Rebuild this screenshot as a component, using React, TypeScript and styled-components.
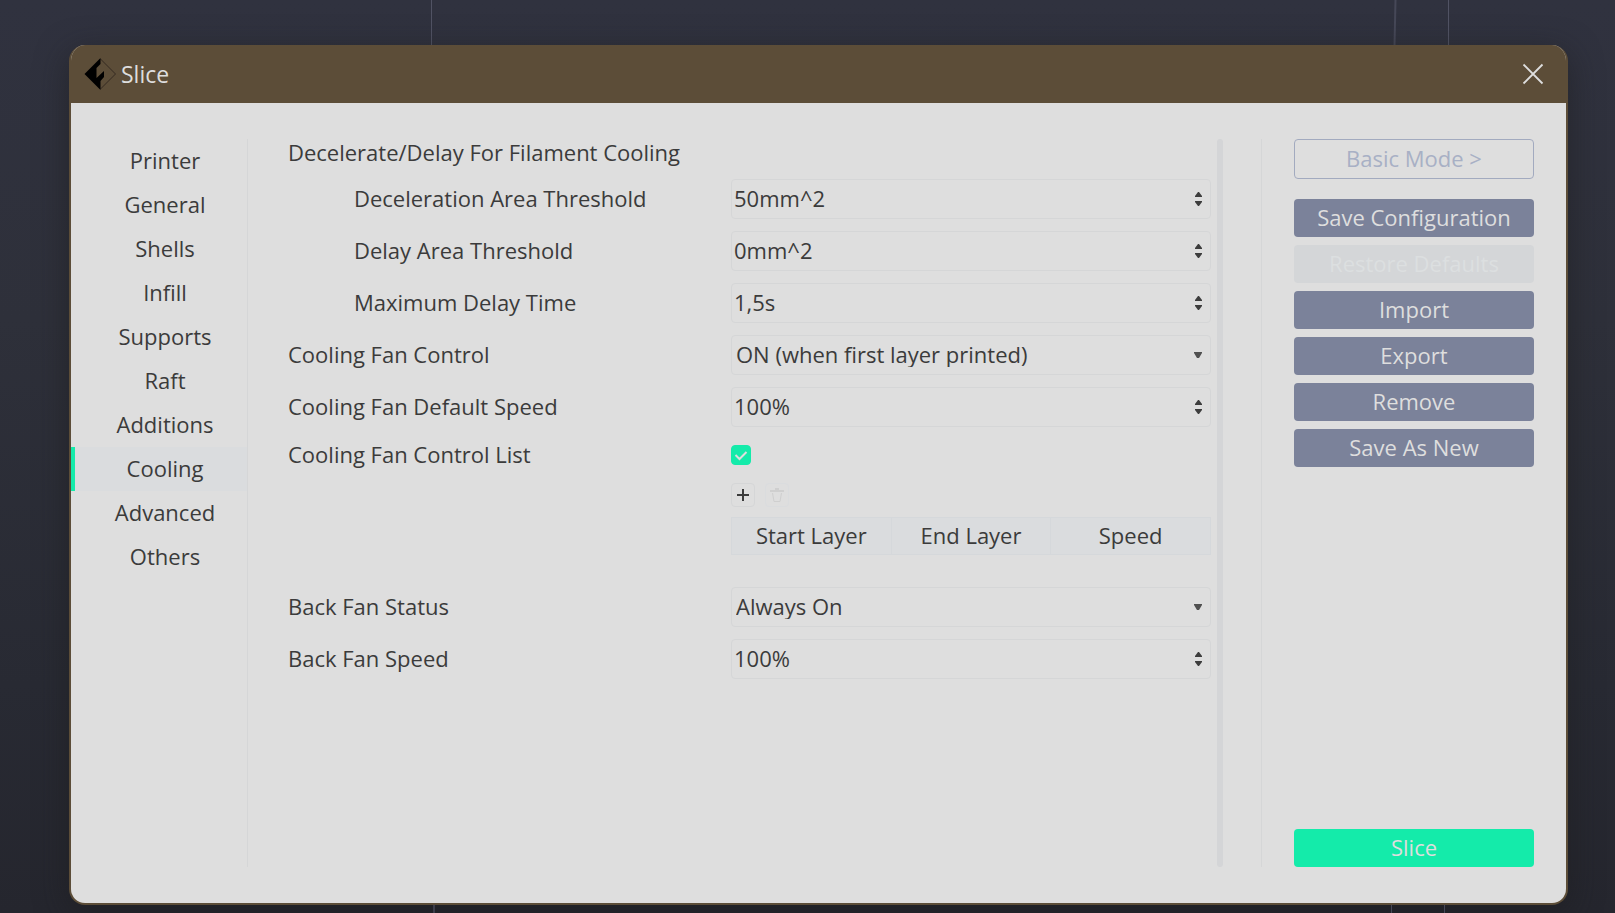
import React, { useState } from "react";
import styled, { createGlobalStyle } from "styled-components";

const color = {
  frame: "#5c4d38",
  panel: "#dedede",
  text: "#3b3b3b",
  line: "#d5d6d7",
  tint: "#dadcde",
  accent: "#14ebaa",
  slate: "#7b829a",
};

const GlobalStyle = createGlobalStyle`
  * { box-sizing: border-box; }
  body { margin: 0; background: #2b2d36; }
  body, button, input, select {
    font-family: "Open Sans", "Noto Sans", sans-serif;
    font-size: 22px;
    line-height: 26px;
    color: ${color.text};
  }
`;

const Viewport = styled.div`
  position: relative;
  display: flex;
  min-height: 100vh;
  padding: 45px 47px 8px 69px;
  background: linear-gradient(180deg, #30323f 0%, #2e303a 35%, #282a33 75%, #25262e 100%);
`;

const Guides = styled.svg`
  position: absolute;
  inset: 0;
  width: 100%;
  height: 100%;
`;

const Dialog = styled.section`
  position: relative;
  flex: 1;
  display: flex;
  flex-direction: column;
  min-width: 0;
  border: 2px solid ${color.frame};
  border-top: 0;
  border-radius: 16px;
  background: ${color.panel};
  box-shadow: 0 8px 32px rgba(28, 28, 30, 0.6);
  overflow: hidden;
`;

const TitleBar = styled.header`
  display: flex;
  align-items: center;
  gap: 5px;
  height: 58px;
  padding: 0 22px 0 13px;
  background: ${color.frame};
`;

const Title = styled.h1`
  flex: 1;
  margin: 0;
  font-size: 23px;
  font-weight: 400;
  color: ${color.panel};
`;

const CloseButton = styled.button`
  display: flex;
  padding: 0;
  border: 0;
  background: none;
`;

const Body = styled.div`
  flex: 1;
  display: flex;
  padding: 36px 32px 36px 0;
`;

const Nav = styled.nav`
  flex: 0 0 177px;
  display: flex;
  flex-direction: column;
  border-right: 1px solid ${color.line};
`;

const NavItem = styled.button<{ $active: boolean }>`
  height: 44px;
  padding: 0 0 2px 8px;
  border: 0;
  border-left: 4px solid ${(p) => (p.$active ? color.accent : "transparent")};
  background: ${(p) => (p.$active ? color.tint : "none")};
  text-align: center;
`;

const Form = styled.form`
  flex: 1;
  display: flex;
  flex-direction: column;
  gap: 12px;
  padding: 0 6px 0 40px;
`;

const Heading = styled.h2`
  margin: 0;
  padding-bottom: 2px;
  font-size: 22px;
  font-weight: 400;
`;

const Row = styled.div`
  display: flex;
  align-items: center;
  min-height: 32px;
`;

const Label = styled.label<{ $indent?: boolean }>`
  flex: 0 0 443px;
  padding-bottom: 2px;
  padding-left: ${(p) => (p.$indent ? 66 : 0)}px;
`;

const Field = styled.div`
  flex: 1;
  display: flex;
  align-items: center;
  height: 40px;
  padding-right: 8px;
  border: 1px solid ${color.line};
  border-radius: 4px;
`;

const TextInput = styled.input`
  flex: 1;
  min-width: 0;
  height: 38px;
  padding: 0 0 2px 2px;
  border: 0;
  outline: 0;
  background: none;
`;

const Steppers = styled.div`
  display: flex;
  flex-direction: column;
`;

const StepButton = styled.button`
  display: flex;
  padding: 2px 0;
  border: 0;
  background: none;
`;

const SelectBox = styled.div`
  flex: 1;
  display: grid;
  align-items: center;
  > * { grid-area: 1 / 1; }
  > svg { justify-self: end; margin-right: 9px; pointer-events: none; }
`;

const Select = styled.select`
  width: 100%;
  height: 40px;
  padding: 0 24px 2px 4px;
  border: 1px solid ${color.line};
  border-radius: 4px;
  outline: 0;
  appearance: none;
  background: none;
`;

const CheckWrap = styled.span`
  display: grid;
  > * { grid-area: 1 / 1; }
  > svg { pointer-events: none; }
`;

const Checkbox = styled.input`
  width: 20px;
  height: 20px;
  margin: 0;
  appearance: none;
  border: 1px solid ${color.accent};
  border-radius: 4px;
  &:checked { background: ${color.accent}; }
  &:not(:checked) + svg { visibility: hidden; }
`;

const LayerList = styled.div`
  display: flex;
  flex-direction: column;
  gap: 10px;
  margin-left: 443px;
  padding-bottom: 20px;
`;

const Tools = styled.div`
  display: flex;
  gap: 10px;
`;

const ToolButton = styled.button`
  display: grid;
  place-items: center;
  width: 24px;
  height: 24px;
  padding: 0;
  border: 1px solid ${color.line};
  border-radius: 4px;
  background: none;
  &:disabled { border-color: ${color.tint}; }
`;

const Table = styled.table`
  width: 100%;
  table-layout: fixed;
  border-collapse: collapse;
`;

const HeaderCell = styled.th`
  height: 37px;
  padding: 0 0 2px;
  border: 1px solid #d5d8db;
  background: ${color.tint};
  font-weight: 400;
`;

const ScrollTrack = styled.div`
  flex: 0 0 6px;
  margin-right: 38px;
  border-radius: 3px;
  background: #d4d5d7;
`;

const Actions = styled.aside`
  flex: 0 0 273px;
  display: flex;
  flex-direction: column;
  gap: 8px;
  padding-left: 32px;
  border-left: 1px solid ${color.line};
`;

const ActionButton = styled.button`
  height: 38px;
  padding: 0 0 2px;
  border: 0;
  border-radius: 4px;
  background: ${color.slate};
  color: ${color.panel};
  &:disabled { background: #d4d6d8; color: #dcdfe0; }
`;

const ModeButton = styled(ActionButton)`
  height: 40px;
  margin-bottom: 12px;
  border: 1px solid #a2aabf;
  background: none;
  color: #a8b0c5;
`;

const SliceButton = styled(ActionButton)`
  margin-top: auto;
  background: ${color.accent};
`;

const sections = ["Printer", "General", "Shells", "Infill", "Supports", "Raft", "Additions", "Cooling", "Advanced", "Others"];

function SpinRow({ id, label, value, indent }: { id: string; label: string; value: string; indent?: boolean }) {
  return (
    <Row>
      <Label htmlFor={id} $indent={indent}>{label}</Label>
      <Field>
        <TextInput id={id} defaultValue={value} />
        <Steppers>
          <StepButton type="button" aria-label={`Increase ${label}`}>
            <svg width="7" height="5"><path d="M0 5V4L3 0H4L7 4V5Z" fill="#3d3d3d" /></svg>
          </StepButton>
          <StepButton type="button" aria-label={`Decrease ${label}`}>
            <svg width="7" height="5"><path d="M0 0V1L3 5H4L7 1V0Z" fill="#3d3d3d" /></svg>
          </StepButton>
        </Steppers>
      </Field>
    </Row>
  );
}

function SelectRow({ id, label, options }: { id: string; label: string; options: string[] }) {
  return (
    <Row>
      <Label htmlFor={id}>{label}</Label>
      <SelectBox>
        <Select id={id}>
          {options.map((o) => <option key={o}>{o}</option>)}
        </Select>
        <svg width="8" height="6"><path d="M0 0H8V1L5 6H3L0 1Z" fill="#505050" /></svg>
      </SelectBox>
    </Row>
  );
}

export default function App() {
  const [section, setSection] = useState("Cooling");
  return (
    <>
      <GlobalStyle />
      <Viewport>
        <Guides viewBox="0 0 1615 913" preserveAspectRatio="none" stroke="#515364" strokeWidth="1" aria-hidden>
          <path d="M431.5 0V46M1448.5 0V46" />
          <path d="M1395.5 0L1394.5 46" stroke="#464858" strokeWidth="2" />
        </Guides>
        <Dialog aria-label="Slice">
          <TitleBar>
            <svg width="32" height="32" viewBox="0 0 32 32">
              <path d="M16.500 1L31.500 16L16.500 31" fill="none" stroke="#352b20" />
              <path d="M16.500 0V6L12.500 10V20L20 13V19L16.500 23V32L0.500 16Z" fill="#000" />
            </svg>
            <Title>Slice</Title>
            <CloseButton type="button" aria-label="Close">
              <svg width="22" height="22" viewBox="0 0 22 22">
                <path d="M1.500 1.500L20.500 20.500M20.500 1.500L1.500 20.500" stroke="#dedede" strokeWidth="1.800" />
              </svg>
            </CloseButton>
          </TitleBar>
          <Body>
            <Nav>
              {sections.map((s) => (
                <NavItem key={s} type="button" $active={s === section} onClick={() => setSection(s)}>{s}</NavItem>
              ))}
            </Nav>
            <Form>
              <Heading>Decelerate/Delay For Filament Cooling</Heading>
              <SpinRow id="decel" label="Deceleration Area Threshold" value="50mm^2" indent />
              <SpinRow id="delay" label="Delay Area Threshold" value="0mm^2" indent />
              <SpinRow id="max" label="Maximum Delay Time" value="1,5s" indent />
              <SelectRow id="fan" label="Cooling Fan Control" options={["ON (when first layer printed)"]} />
              <SpinRow id="speed" label="Cooling Fan Default Speed" value="100%" />
              <Row>
                <Label htmlFor="list">Cooling Fan Control List</Label>
                <CheckWrap>
                  <Checkbox id="list" type="checkbox" defaultChecked />
                  <svg width="20" height="20"><path d="M4.500 10L8.500 14L15.500 7" fill="none" stroke="#dedede" strokeWidth="2" /></svg>
                </CheckWrap>
              </Row>
              <LayerList>
                <Tools>
                  <ToolButton type="button" aria-label="Add layer range">
                    <svg width="12" height="12"><path d="M6 0V12M0 6H12" stroke="#3b3b3b" strokeWidth="2" /></svg>
                  </ToolButton>
                  <ToolButton type="button" aria-label="Delete layer range" disabled>
                    <svg width="14" height="14" fill="none" stroke="#cfcfcf">
                      <path d="M0 3H14" strokeWidth="2" />
                      <path d="M5 1H9" strokeWidth="2" />
                      <path d="M2.500 5L4 13.500H10L11.500 5" />
                    </svg>
                  </ToolButton>
                </Tools>
                <Table>
                  <thead>
                    <tr>
                      <HeaderCell scope="col">Start Layer</HeaderCell>
                      <HeaderCell scope="col">End Layer</HeaderCell>
                      <HeaderCell scope="col">Speed</HeaderCell>
                    </tr>
                  </thead>
                </Table>
              </LayerList>
              <SelectRow id="back" label="Back Fan Status" options={["Always On"]} />
              <SpinRow id="backSpeed" label="Back Fan Speed" value="100%" />
            </Form>
            <ScrollTrack />
            <Actions>
              <ModeButton type="button">Basic Mode &gt;</ModeButton>
              <ActionButton type="button">Save Configuration</ActionButton>
              <ActionButton type="button" disabled>Restore Defaults</ActionButton>
              <ActionButton type="button">Import</ActionButton>
              <ActionButton type="button">Export</ActionButton>
              <ActionButton type="button">Remove</ActionButton>
              <ActionButton type="button">Save As New</ActionButton>
              <SliceButton type="button">Slice</SliceButton>
            </Actions>
          </Body>
        </Dialog>
        <Guides viewBox="0 0 1615 913" preserveAspectRatio="none" stroke="#3c3d4a" strokeWidth="1" pointerEvents="none" aria-hidden>
          <path d="M434 905V913" strokeWidth="2" />
          <path d="M1391.500 905V913M1444.500 905V913" stroke="#464858" />
        </Guides>
      </Viewport>
    </>
  );
}
